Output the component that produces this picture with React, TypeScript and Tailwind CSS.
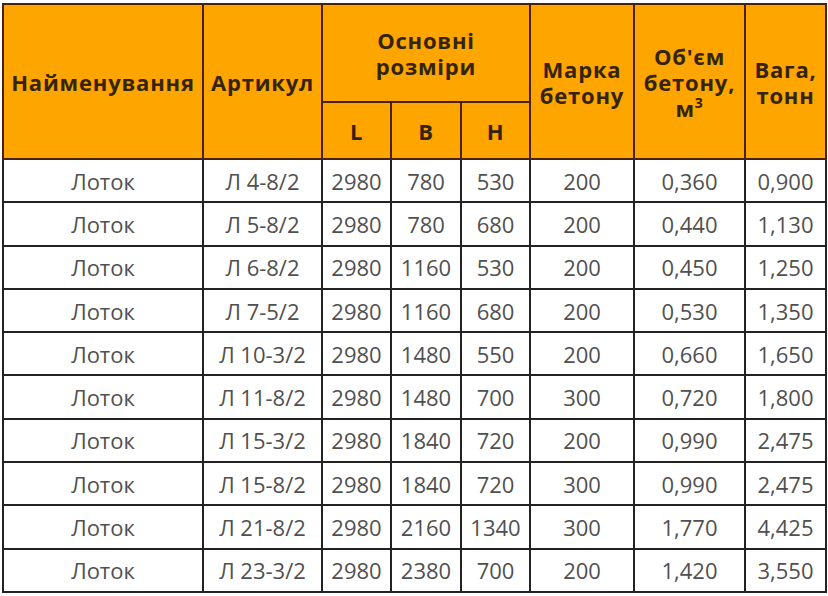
import React from "react";

const rows = [
  ["Лоток", "Л 4-8/2", "2980", "780", "530", "200", "0,360", "0,900"],
  ["Лоток", "Л 5-8/2", "2980", "780", "680", "200", "0,440", "1,130"],
  ["Лоток", "Л 6-8/2", "2980", "1160", "530", "200", "0,450", "1,250"],
  ["Лоток", "Л 7-5/2", "2980", "1160", "680", "200", "0,530", "1,350"],
  ["Лоток", "Л 10-3/2", "2980", "1480", "550", "200", "0,660", "1,650"],
  ["Лоток", "Л 11-8/2", "2980", "1480", "700", "300", "0,720", "1,800"],
  ["Лоток", "Л 15-3/2", "2980", "1840", "720", "200", "0,990", "2,475"],
  ["Лоток", "Л 15-8/2", "2980", "1840", "720", "300", "0,990", "2,475"],
  ["Лоток", "Л 21-8/2", "2980", "2160", "1340", "300", "1,770", "4,425"],
  ["Лоток", "Л 23-3/2", "2980", "2380", "700", "200", "1,420", "3,550"],
];

const widths = [200, 119, 69, 70, 69, 104, 111, 81];

export default function App() {
  const th =
    "border-2 border-[#4a2108] bg-[#ffa500] text-[#35240c] font-bold text-[22px] tracking-[0.8px] leading-[26px] text-center align-middle p-0";
  const td =
    "border-2 border-[#222222] text-[#505050] text-[22px] leading-none text-center align-middle p-0 h-[43.3px]";
  return (
    <div className="w-[828px] h-[596px] bg-white pl-[2px] pt-[3px]" style={{ fontFamily: '"Open Sans", sans-serif' }}>
      <table className="border-collapse table-fixed w-[823px]">
        <colgroup>
          {widths.map((w, i) => (
            <col key={i} style={{ width: w }} />
          ))}
        </colgroup>
        <thead>
          <tr className="h-[98px]">
            <th rowSpan={2} className={th}>Найменування</th>
            <th rowSpan={2} className={th}>Артикул</th>
            <th colSpan={3} className={th}>
              Основні
              <br />
              розміри
            </th>
            <th rowSpan={2} className={th}>
              Марка
              <br />
              бетону
            </th>
            <th rowSpan={2} className={th}>
              Об'єм
              <br />
              бетону,
              <br />
              м<span className="relative -top-[9px] text-[14px] leading-none align-baseline">3</span>
            </th>
            <th rowSpan={2} className={th}>
              Вага,
              <br />
              тонн
            </th>
          </tr>
          <tr className="h-[57px]">
            <th className={th}>L</th>
            <th className={th}>B</th>
            <th className={th}>H</th>
          </tr>
        </thead>
        <tbody>
          {rows.map((r, i) => (
            <tr key={i}>
              {r.map((c, j) => (
                <td key={j} className={td}>
                  {c}
                </td>
              ))}
            </tr>
          ))}
        </tbody>
      </table>
    </div>
  );
}
